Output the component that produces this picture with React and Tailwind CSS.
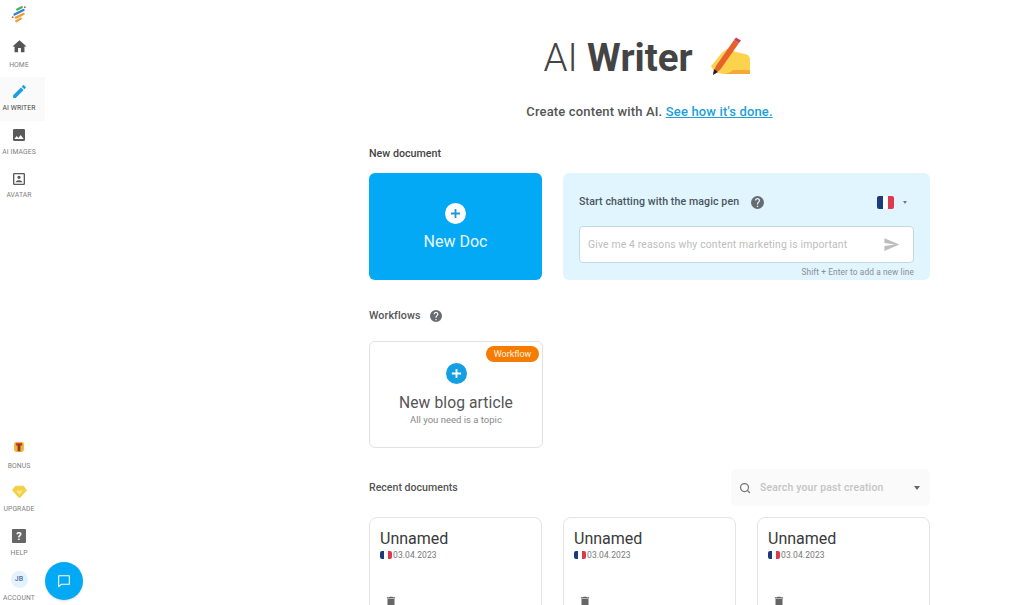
import React from "react";
import { Search } from "lucide-react";

const font = { fontFamily: "Roboto, 'Liberation Sans', sans-serif" };

function Flag({ className = "" }) {
  return (
    <span className={"flex shrink-0 " + className}>
      <span className="w-1/3 h-full bg-[#1d3a7a] rounded-l-[2px]" />
      <span className="w-1/3 h-full bg-white" />
      <span className="w-1/3 h-full bg-[#dd3a4e] rounded-r-[2px]" />
    </span>
  );
}

function Help({ className = "" }) {
  return (
    <svg viewBox="2 2 20 20" className={className} fill="#666c72">
      <path d="M12 2a10 10 0 1 0 0 20 10 10 0 0 0 0-20zm1 17h-2v-2h2v2zm2.07-7.75-.9.92C13.45 12.9 13 13.5 13 15h-2v-.5c0-1.1.45-2.1 1.17-2.83l1.24-1.26c.37-.36.59-.86.59-1.41 0-1.1-.9-2-2-2s-2 .9-2 2H8c0-2.21 1.79-4 4-4s4 1.79 4 4c0 .88-.36 1.68-.93 2.25z" />
    </svg>
  );
}

function Trash() {
  return (
    <svg viewBox="0 0 24 24" className="w-[14px] h-[14px]" fill="#666">
      <path d="M6 19c0 1.1.9 2 2 2h8c1.1 0 2-.9 2-2V7H6v12zM19 4h-3.5l-1-1h-5l-1 1H5v2h14V4z" />
    </svg>
  );
}

function NavItem({ icon, label, active, className = "", labelClass = "mt-[5px]" }) {
  return (
    <div className={"w-[45px] pr-[7px] flex flex-col items-center " + (active ? "bg-[#fafafa] " : "") + className}>
      <div className="h-[20px] flex items-center justify-center">{icon}</div>
      <span className={"text-[6.8px] leading-[8px] tracking-[0.1px] whitespace-nowrap " + labelClass + " " + (active ? "text-[#444]" : "text-[#808080]")}>{label}</span>
    </div>
  );
}

function DocCard() {
  return (
    <div className="w-[173px] h-[110px] border border-[#e4e4e4] rounded-[8px] pl-[10px] pt-[11px] bg-white">
      <div className="text-[16px] leading-[20px] text-[#3a3a3a]">Unnamed</div>
      <div className="flex items-center gap-[1px] mt-[0px]">
        <Flag className="w-[12px] h-[8px]" />
        <span className="text-[8.5px] leading-[12px] text-[#777] tracking-[0.1px]">03.04.2023</span>
      </div>
      <div className="mt-[34px] ml-[4px]"><Trash /></div>
    </div>
  );
}

export default function App() {
  return (
    <div className="relative h-[605px] w-[1024px] overflow-hidden bg-white flex" style={font}>
      <aside className="w-[45px] shrink-0 h-full flex flex-col justify-between pt-[5px] pb-[3px]">
        <div className="flex flex-col">
          <div className="h-[31px] pr-[8px] flex justify-center items-start">
            <svg viewBox="0 0 20 20" className="w-[18px] h-[18px]" fill="none" strokeLinecap="round" strokeWidth="2.6">
              <path d="M8 5 L13 2.5" stroke="#4caf50" />
              <path d="M5 10.5 L15 5.5" stroke="#2f80d8" />
              <path d="M6.5 14 L15 10" stroke="#ef9a3c" />
              <path d="M7 18 L12 15" stroke="#f2a33a" />
              <circle cx="3" cy="13.5" r="1" fill="#d9455f" />
              <circle cx="16.5" cy="2.5" r="1" fill="#d9455f" />
            </svg>
          </div>
          <NavItem icon={<svg viewBox="0 0 24 24" className="w-[17px] h-[17px]" fill="#555"><path d="M10 20v-6h4v6h5v-8h3L12 3 2 12h3v8z" /></svg>} label="HOME" className="h-[41px] pt-0" />
          <NavItem active icon={<svg viewBox="0 0 24 24" className="w-[17px] h-[17px]" fill="#1e9fe0"><path d="M3 17.25V21h3.75L17.81 9.94l-3.75-3.75L3 17.25zM20.71 7.04a1 1 0 0 0 0-1.41l-2.34-2.34a1 1 0 0 0-1.41 0l-1.83 1.83 3.75 3.75 1.83-1.83z" /></svg>} label="AI WRITER" className="h-[44px] pt-[4px]" labelClass="mt-[3px]" />
          <NavItem icon={<svg viewBox="0 0 24 24" className="w-[16px] h-[16px]" fill="#5a5a5a"><path d="M21 19V5a2 2 0 0 0-2-2H5a2 2 0 0 0-2 2v14a2 2 0 0 0 2 2h14a2 2 0 0 0 2-2zM8.5 13.5l2.5 3 3.5-4.5 4.5 6H5l3.5-4.5z" /></svg>} label="AI IMAGES" className="h-[44px] pt-[4px]" labelClass="mt-[3px]" />
          <NavItem icon={<svg viewBox="0 0 24 24" className="w-[16px] h-[16px]" fill="#5a5a5a"><path d="M3 5v14a2 2 0 0 0 2 2h14a2 2 0 0 0 2-2V5a2 2 0 0 0-2-2H5a2 2 0 0 0-2 2zm16 14H5V5h14v14zm-7-7a2.5 2.5 0 1 0 0-5 2.5 2.5 0 0 0 0 5zm5 4.5c0-1.7-3.3-2.5-5-2.5s-5 .8-5 2.5V17h10v-.5z" /></svg>} label="AVATAR" className="pt-[4px]" labelClass="mt-[2px]" />
        </div>
        <div className="flex flex-col">
          <NavItem icon={<svg viewBox="0 0 20 20" className="w-[14px] h-[14px]"><rect x="3" y="3" width="14" height="14" rx="3" fill="#f2b33d" /><rect x="5.5" y="4.5" width="9" height="3.5" fill="#c9412b" /><rect x="8" y="6" width="4" height="10" fill="#8a3a26" /></svg>} label="BONUS" className="h-[44px]" />
          <NavItem icon={<svg viewBox="0 0 20 20" className="w-[15px] h-[15px]"><path d="M5 3h10l4 5-9 10L1 8z" fill="#f2cf46" stroke="#f2cf46" strokeLinejoin="round" strokeWidth="1.5" /><path d="M10 14l-4-4 2-2 2 1.5L12 8l2 2z" fill="#fbe88a" /></svg>} label="UPGRADE" className="h-[45px]" labelClass="mt-[4px]" />
          <NavItem icon={<div className="w-[14px] h-[14px] bg-[#666] rounded-[1px] flex items-center justify-center text-white text-[11px] font-bold leading-none">?</div>} label="HELP" className="h-[43px]" labelClass="mt-[3px]" />
          <NavItem icon={<div className="w-[17px] h-[17px] rounded-full bg-[#e3f2fc] flex items-center justify-center text-[7px] font-medium text-[#4a6fa0]">JB</div>} label="ACCOUNT" />
        </div>
      </aside>

      <main className="ml-[324px] w-[561px] shrink-0">
        <h1 className="mt-[34px] pr-[6px] flex items-center justify-center h-[47px] text-[38.5px] leading-[47px] text-[#444] font-light">
          <span>AI&nbsp;</span><span className="font-bold">Writer</span>
          <svg viewBox="0 0 41 41" className="w-[41px] h-[41px] ml-[16px]">
            <path d="M2 29 C6 25 13 14 18 12 C22 11 25 15 27 15 L36 17 C40 18 41 20 41 24 L41 37 L18 37 C12 37 5 36 2 29 Z" fill="#fbd34c" />
            <path d="M16 37 H41 V33 H24 C22 35 19 36 16 37 Z" fill="#f5a93a" />
            <path d="M4 37 L7 29 L25 3 L30 6 L11 33 Z" fill="#e8612c" />
            <path d="M25 3 L27 0.5 L32 3.5 L30 6 Z" fill="#c9415a" />
            <path d="M4 38 L5 32 L9 35 Z" fill="#222" />
          </svg>
        </h1>
        <p className="mt-[22px] text-center text-[13px] leading-[18px] font-medium text-[#555] tracking-[0.15px]">
          Create content with AI. <a className="text-[#1c9fd8] underline">See how it's done.</a>
        </p>

        <div className="mt-[26px] text-[10.7px] leading-[14px] font-medium text-[#444]">New document</div>
        <div className="mt-[12px] flex gap-[21px]">
          <div className="w-[173px] h-[107px] bg-[#03a9f4] rounded-[6px] flex flex-col items-center text-white">
            <div className="mt-[30px] w-[21px] h-[21px] rounded-full bg-white flex items-center justify-center">
              <svg viewBox="0 0 12 12" className="w-[11px] h-[11px]" stroke="#1f97d4" strokeWidth="2"><path d="M6 1v10M1 6h10" /></svg>
            </div>
            <span className="mt-[8px] text-[16px] leading-[20px] text-[#e8f7ff]">New Doc</span>
          </div>
          <div className="w-[367px] h-[107px] bg-[#e1f5fe] rounded-[6px] px-[16px] relative">
            <div className="flex items-center h-[16px] mt-[21px]">
              <span className="text-[10.6px] font-medium text-[#4a5560] tracking-[0.1px]">Start chatting with the magic pen</span>
              <Help className="w-[13px] h-[13px] ml-[12px]" />
              <Flag className="w-[17px] h-[13px] ml-auto mr-[2px]" />
              <span className="ml-[7px] mr-[7px] w-0 h-0 border-x-[2.5px] border-x-transparent border-t-[3px] border-t-[#777]" />
            </div>
            <div className="mt-[16px] h-[37px] bg-white border border-[#c4d8e2] rounded-[4px] flex items-center pl-[8px] pr-[13px]">
              <span className="text-[10.4px] text-[#bdbdbd] tracking-[0.15px]">Give me 4 reasons why content marketing is important</span>
              <svg viewBox="0 0 24 24" className="w-[17px] h-[17px] ml-auto" fill="#bdbdbd"><path d="M2 21l21-9L2 3v7l15 2-15 2z" /></svg>
            </div>
            <div className="text-right text-[8.3px] leading-[12px] mt-[3px] text-[#8a8f94] tracking-[0.1px]">Shift + Enter to add a new line</div>
          </div>
        </div>

        <div className="mt-[29px] flex items-center h-[14px]">
          <span className="text-[10.7px] font-medium text-[#555] tracking-[0.1px]">Workflows</span>
          <Help className="w-[12px] h-[12px] ml-[9px]" />
        </div>
        <div className="mt-[18px] relative w-[174px] h-[107px] border border-[#e2e2e2] rounded-[6px] flex flex-col items-center">
          <span className="absolute right-[3px] top-[4px] h-[16px] w-[53px] rounded-full bg-[#f57c00] text-[#fff3e0] text-[9px] leading-[16px] text-center">Workflow</span>
          <div className="mt-[21px] w-[21px] h-[21px] rounded-full bg-[#12a0e2] flex items-center justify-center">
            <svg viewBox="0 0 12 12" className="w-[11px] h-[11px]" stroke="#fff" strokeWidth="2"><path d="M6 1v10M1 6h10" /></svg>
          </div>
          <span className="mt-[9px] text-[15.6px] leading-[20px] text-[#555] tracking-[0.1px]">New blog article</span>
          <span className="text-[9.5px] leading-[14px] text-[#888] mt-[0px]">All you need is a topic</span>
        </div>

        <div className="mt-[21px] flex items-center justify-between h-[37px]">
          <span className="text-[10.6px] font-medium text-[#555]">Recent documents</span>
          <div className="w-[199px] h-[37px] rounded-[6px] bg-[#fafafa] flex items-center pl-[8px] pr-[10px]">
            <Search className="w-[12px] h-[12px] text-[#777]" strokeWidth={2.5} />
            <span className="ml-[9px] text-[10.4px] font-medium text-[#c4c4c4] tracking-[0.2px]">Search your past creation</span>
            <span className="ml-auto w-0 h-0 border-x-[3.5px] border-x-transparent border-t-[4px] border-t-[#666]" />
          </div>
        </div>
        <div className="mt-[11px] flex gap-[21px]">
          <DocCard /><DocCard /><DocCard />
        </div>
      </main>

      <div className="absolute left-[45px] top-[562px] w-[38px] h-[38px] rounded-full bg-[#03a9f4] flex items-center justify-center shadow-sm">
        <svg viewBox="0 0 24 24" className="w-[16px] h-[16px]" fill="none" stroke="#fff" strokeWidth="1.6"><path d="M4 4h16v13H8l-4 3.5z" strokeLinejoin="round" /></svg>
      </div>
    </div>
  );
}
